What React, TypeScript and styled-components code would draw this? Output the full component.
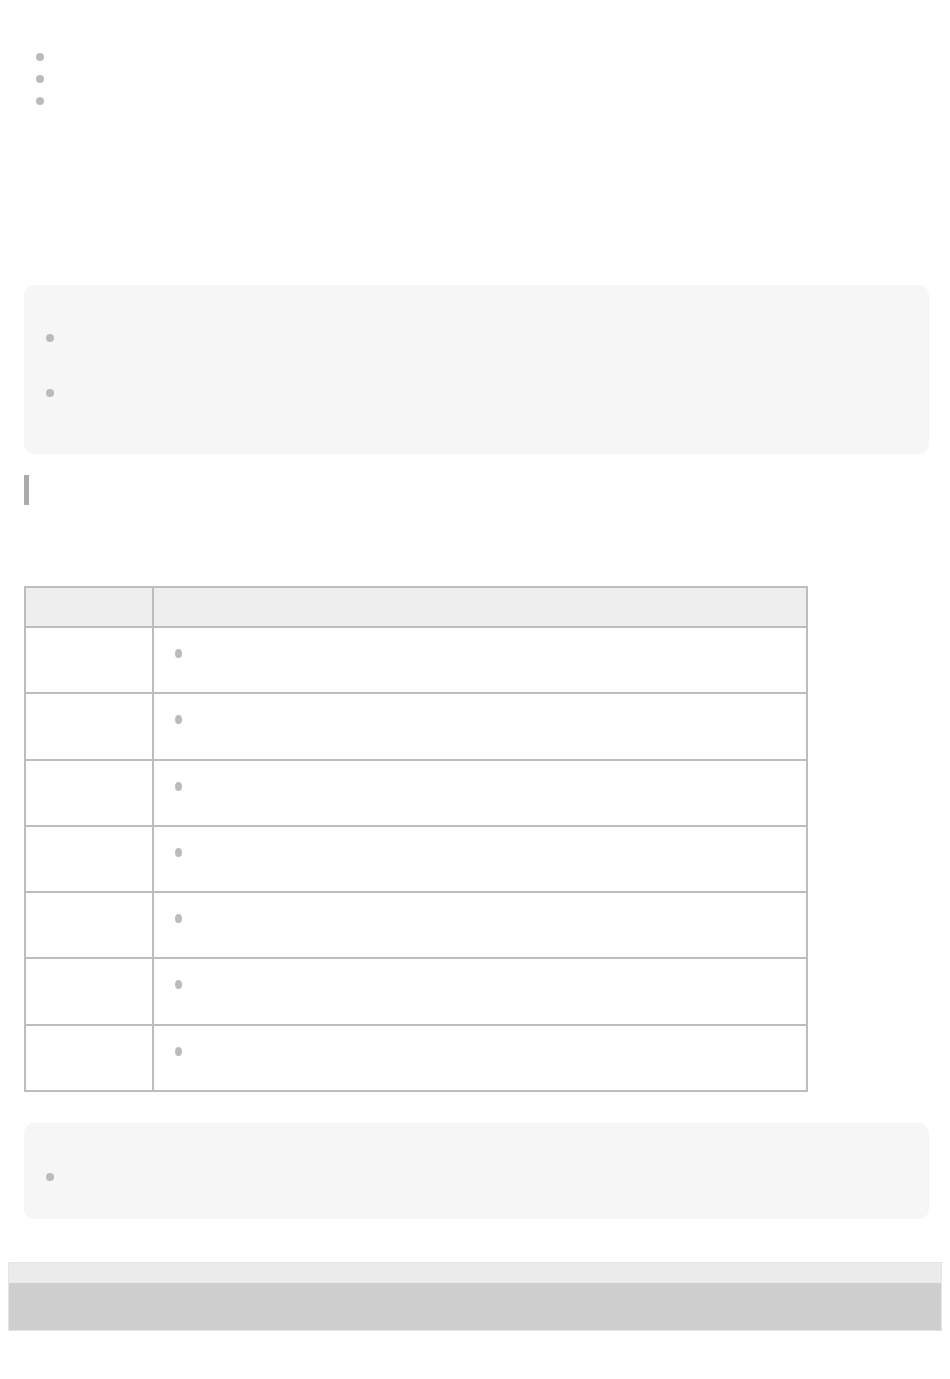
import React from "react";
import styled, { createGlobalStyle } from "styled-components";

const Global = createGlobalStyle`
  html, body { margin: 0; padding: 0; background: #ffffff; }
  body { font-family: "Liberation Sans", Arial, sans-serif; font-size: 14px; color: #ffffff; }
  * { box-sizing: border-box; }
`;

const Page = styled.div`
  padding: 0 8px 48px 8px;
`;

const Content = styled.main`
  padding: 0 13px 0 16px;
  display: flex;
  flex-direction: column;
`;

const Dot = styled.span<{ $w?: number; $h?: number }>`
  display: inline-block;
  width: ${(p) => p.$w ?? 8}px;
  height: ${(p) => p.$h ?? 8}px;
  border-radius: 50%;
  background: #bbbbbb;
  flex: none;
`;

const TopList = styled.ul`
  list-style: none;
  margin: 46px 0 0 0;
  padding: 0;
`;

const TopItem = styled.li`
  height: 22px;
  display: flex;
  align-items: center;
  padding-left: 12px;
`;

const Note = styled.section<{ $mt: number; $pt: number; $pb: number }>`
  margin-top: ${(p) => p.$mt}px;
  background: #f6f6f6;
  border-radius: 10px;
  padding: ${(p) => p.$pt}px 22px ${(p) => p.$pb}px 22px;
`;

const NoteItem = styled.div<{ $h: number }>`
  height: ${(p) => p.$h}px;
  display: flex;
  align-items: center;
`;

const Heading = styled.div`
  margin-top: 21px;
  width: 5px;
  height: 30px;
  background: #ababab;
`;

const Table = styled.table`
  margin-top: 81px;
  width: 784px;
  border-collapse: collapse;
  border: 2px solid #bdbdbd;
`;

const Th = styled.th<{ $w?: number }>`
  background: #eeeeee;
  border: 2px solid #bdbdbd;
  height: 40px;
  padding: 0;
  ${(p) => (p.$w ? `width: ${p.$w}px;` : "")}
`;

const Tr = styled.tr`
  height: 66.3px;
`;

const Td = styled.td`
  border: 2px solid #bdbdbd;
  padding: 0;
  vertical-align: top;
`;

const CellBody = styled.div`
  display: flex;
  align-items: center;
  height: 51px;
  padding-left: 21px;
`;

const Footer = styled.footer`
  margin-top: 43px;
  border: 1px solid #e4e4e4;
  display: flex;
  flex-direction: column;
`;

const FooterTop = styled.div`
  height: 20px;
  background: #ebebeb;
`;

const FooterBottom = styled.div`
  height: 47px;
  background: #cecece;
`;

const rows = [0, 1, 2, 3, 4, 5, 6];

export default function App() {
  return (
    <>
      <Global />
      <Page>
        <Content>
          <TopList>
            <TopItem><Dot /></TopItem>
            <TopItem><Dot /></TopItem>
            <TopItem><Dot /></TopItem>
          </TopList>

          <Note $mt={173} $pt={25} $pb={34}>
            <NoteItem $h={55}><Dot /></NoteItem>
            <NoteItem $h={55}><Dot /></NoteItem>
          </Note>

          <Heading />

          <Table>
            <thead>
              <tr>
                <Th $w={128}></Th>
                <Th></Th>
              </tr>
            </thead>
            <tbody>
              {rows.map((r) => (
                <Tr key={r}>
                  <Td></Td>
                  <Td>
                    <CellBody>
                      <Dot $w={7} $h={9} />
                    </CellBody>
                  </Td>
                </Tr>
              ))}
            </tbody>
          </Table>

          <Note $mt={31} $pt={31} $pb={19}>
            <NoteItem $h={46}><Dot /></NoteItem>
          </Note>
        </Content>

        <Footer>
          <FooterTop />
          <FooterBottom />
        </Footer>
      </Page>
    </>
  );
}
